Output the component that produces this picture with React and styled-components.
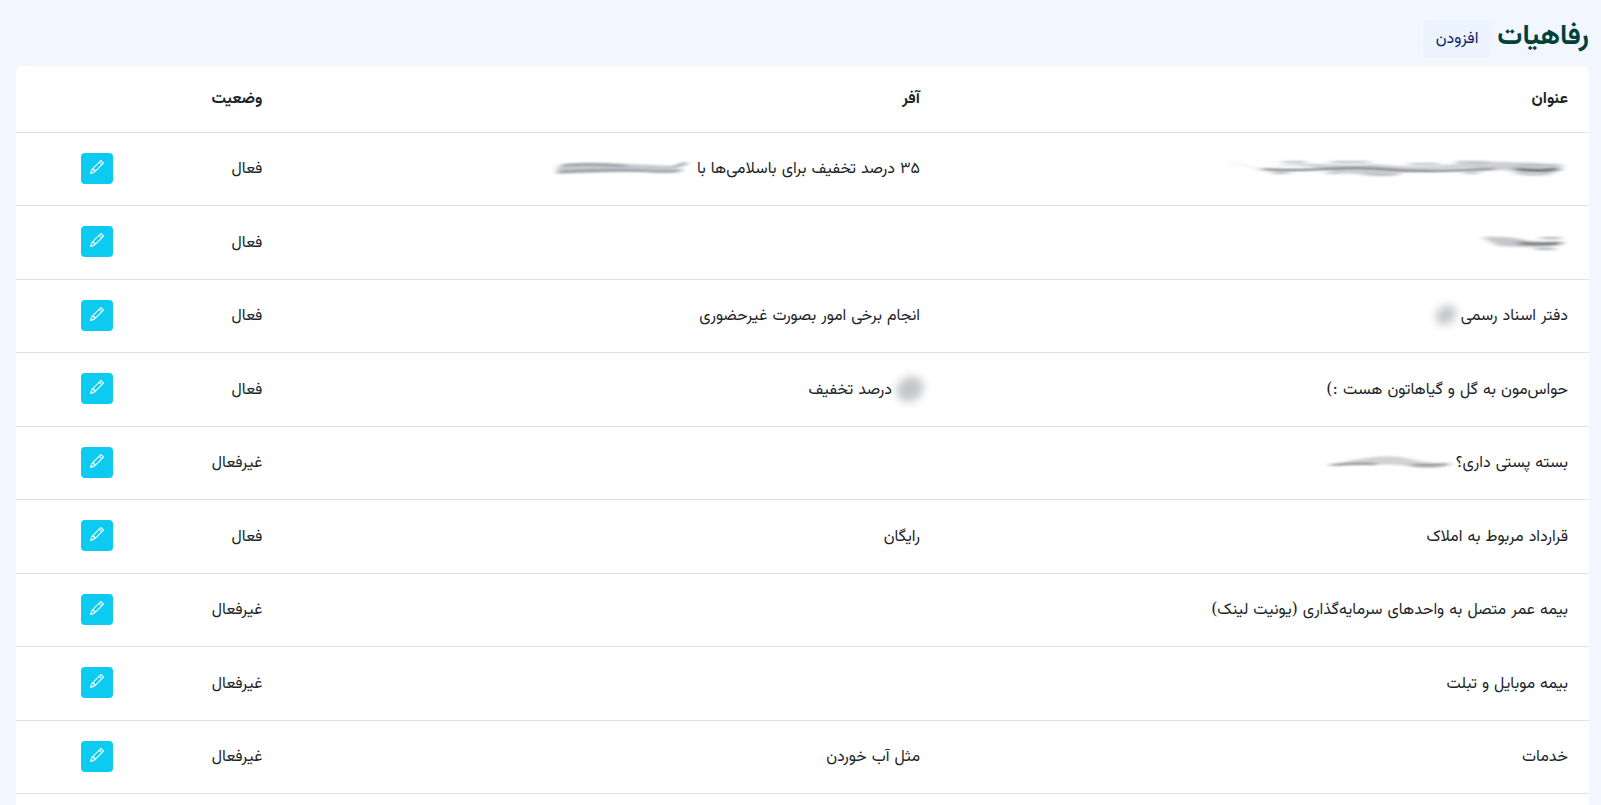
import React, { useId } from "react";
import styled, { createGlobalStyle } from "styled-components";
import { BsPencil } from "react-icons/bs";

const GlobalStyle = createGlobalStyle`
  *, *::before, *::after { box-sizing: border-box; }
  body {
    margin: 0;
    background: #f1f6ff;
    color: #212529;
    font-family: "DejaVu Serif", Vazirmatn, "DejaVu Sans", sans-serif;
    font-size: 16px;
    line-height: 24px;
  }
`;

const Page = styled.main`
  display: flex;
  flex-direction: column;
  min-height: 100vh;
  direction: rtl;
  padding: 16px 12px 0 16px;
`;

const PageHeader = styled.header`
  display: flex;
  align-items: flex-end;
  gap: 6px;
  padding-bottom: 8px;
`;

const Title = styled.h1`
  margin: 0;
  padding-bottom: 4px;
  font-size: 28px;
  line-height: 38px;
  font-weight: 700;
  color: #00413a;
`;

const AddButton = styled.button`
  height: 38px;
  padding: 0 13px 2px;
  border: 0;
  border-radius: 6px;
  background: #ebf3ff;
  color: #0b2363;
  font: inherit;
  cursor: pointer;
`;

const Card = styled.section`
  flex: 1;
  background: #fff;
  border-radius: 6px 6px 0 0;
  overflow: hidden;
`;

const Table = styled.table`
  width: 100%;
  border-collapse: separate;
  border-spacing: 0;
  table-layout: fixed;
`;

const Col = styled.col`
  width: ${(p) => p.$width};
`;

const HeadCell = styled.th`
  height: 67px;
  padding: 0 21px 2px;
  border-bottom: 1px solid #dee2e6;
  text-align: right;
  font-weight: 700;
`;

const Row = styled.tr`
  height: 73px;
  &:nth-child(even) { height: 74px; }
`;

const Cell = styled.td`
  padding: 0 21px 2px;
  border-bottom: 1px solid #dee2e6;
  text-align: right;
  vertical-align: middle;
`;

const CellContent = styled.div`
  display: flex;
  align-items: center;
  gap: ${(p) => p.$gap || 0}px;
`;

const EditButton = styled.button`
  display: flex;
  justify-content: center;
  width: 32px;
  height: 31px;
  padding: 7px 0;
  border: 0;
  border-radius: 4px;
  background: #0dcaf0;
  color: #fff;
  cursor: pointer;
`;

const PencilIcon = styled(BsPencil)`
  stroke: currentColor;
  stroke-width: 0.4px;
`;

const Drawing = styled.svg`
  display: block;
  flex: none;
  overflow: visible;
`;

function Smudge({ width, blurX = 4, blurY = 1, children }) {
  const id = useId();
  return (
    <Drawing width={width} height="32" viewBox={`0 0 ${width} 32`} aria-hidden="true">
      <filter id={id} x="-40%" y="-60%" width="180%" height="220%">
        <feGaussianBlur stdDeviation={`${blurX} ${blurY}`} />
      </filter>
      <g filter={`url(#${id})`} fill="none" strokeLinecap="round">{children}</g>
    </Drawing>
  );
}

const LongSmudge = () => (
  <Smudge width={340} blurX={5} blurY={1}>
    <path d="M32 17Q60 11 92 12T148 12Q190 17 228 12T334 13L328 20Q290 20 260 17T180 20T100 18T32 17Z" fill="#cdcfd2" stroke="none" />
    <path d="M34 17C60 20 90 17 122 16S170 20 200 19S250 18 266 17" stroke="#6f7277" strokeWidth="2" />
    <path d="M288 17Q310 20 330 17" stroke="#666a70" strokeWidth="3" />
    <path d="M45 21H60M100 21H112M137 22Q155 24 170 22M238 21H250M288 21Q310 24 323 21" stroke="#b0b3b7" strokeWidth="2" />
    <path d="M56 10H76M104 10H140M182 12H210M229 10H260M290 13H332" stroke="#b9bcc0" strokeWidth="2" />
    <path d="M4 11L28 16" stroke="#f8f8f8" strokeWidth="4" />
  </Smudge>
);

const ShortSmudge = () => (
  <Smudge width={90} blurX={4} blurY={1}>
    <path d="M4 11Q35 10 50 15L80 16V20Q50 22 20 20Z" fill="#c4c6c9" stroke="none" />
    <path d="M42 17Q60 19 82 17" stroke="#73777c" strokeWidth="3" />
    <path d="M64 12H82M58 23H76" stroke="#a8adb3" strokeWidth="2" />
  </Smudge>
);

const OfferSmudge = () => (
  <Smudge width={136} blurX={3} blurY={1}>
    <path d="M5 14Q20 10 50 11L122 14V19Q60 20 4 22Z" fill="#c5c7cc" stroke="none" />
    <path d="M10 13Q45 11 72 14M6 20Q60 17 90 19T128 18" stroke="#8d9197" strokeWidth="2" />
    <path d="M122 15Q127 13 133 11" stroke="#7d8187" strokeWidth="2" />
  </Smudge>
);

const ThinSmudge = () => (
  <Smudge width={124} blurX={4} blurY={1}>
    <path d="M8 18Q60 4 90 15L117 18V21Q95 24 80 20Q50 17 8 18Z" fill="#d0d2d3" stroke="none" />
    <path d="M4 19Q30 17 48 18M85 19Q105 20 120 18" stroke="#7e8489" strokeWidth="2" />
  </Smudge>
);

const DotSmudge = ({ cx, r }) => (
  <Smudge width={28} blurX={4} blurY={4}>
    <ellipse cx={cx} cy="16" rx={r} ry={r - 2} fill="#c4c6ca" transform={`rotate(-35 ${cx} 16)`} />
  </Smudge>
);

const benefits = [
  {
    title: <LongSmudge />,
    offer: <>۳۵ درصد تخفیف برای باسلامی‌ها با <OfferSmudge /></>,
    gap: 8,
    active: true,
  },
  { title: <ShortSmudge />, active: true },
  { title: <>دفتر اسناد رسمی<DotSmudge cx={13} r={11} /></>, offer: "انجام برخی امور بصورت غیرحضوری", active: true },
  { title: "حواس‌مون به گل و گیاهاتون هست :)", offer: <><DotSmudge cx={18} r={14} />درصد تخفیف</>, active: true },
  { title: <>بسته پستی داری؟<ThinSmudge /></>, gap: 4, active: false },
  { title: "قرارداد مربوط به املاک", offer: "رایگان", active: true },
  { title: "بیمه عمر متصل به واحدهای سرمایه‌گذاری (یونیت لینک)", active: false },
  { title: "بیمه موبایل و تبلت", active: false },
  { title: "خدمات", offer: "مثل آب خوردن", active: false },
];

export default function App() {
  return (
    <>
      <GlobalStyle />
      <Page lang="fa">
        <PageHeader>
          <Title>رفاهیات</Title>
          <AddButton type="button">افزودن</AddButton>
        </PageHeader>
        <Card>
          <Table aria-label="رفاهیات">
            <colgroup>
              <Col $width="41.2%" />
              <Col $width="41.8%" />
              <Col $width="9.5%" />
              <Col $width="7.5%" />
            </colgroup>
            <thead>
              <tr>
                <HeadCell scope="col">عنوان</HeadCell>
                <HeadCell scope="col">آفر</HeadCell>
                <HeadCell scope="col">وضعیت</HeadCell>
                <HeadCell as="td" />
              </tr>
            </thead>
            <tbody>
              {benefits.map((b, i) => (
                <Row key={i}>
                  <Cell><CellContent $gap={b.gap}>{b.title}</CellContent></Cell>
                  <Cell><CellContent $gap={b.gap}>{b.offer}</CellContent></Cell>
                  <Cell>{b.active ? "فعال" : "غیرفعال"}</Cell>
                  <Cell>
                    <EditButton type="button" aria-label="ویرایش">
                      <PencilIcon size={14} />
                    </EditButton>
                  </Cell>
                </Row>
              ))}
            </tbody>
          </Table>
        </Card>
      </Page>
    </>
  );
}
